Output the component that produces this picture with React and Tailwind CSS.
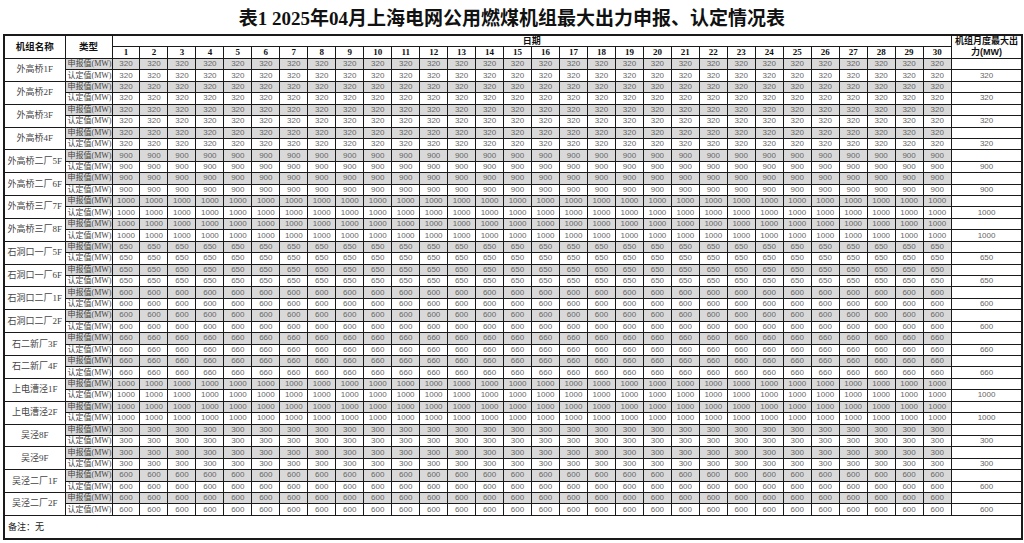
import React from 'react';

const units = [
  ['外高桥1F', 320],
  ['外高桥2F', 320],
  ['外高桥3F', 320],
  ['外高桥4F', 320],
  ['外高桥二厂5F', 900],
  ['外高桥二厂6F', 900],
  ['外高桥三厂7F', 1000],
  ['外高桥三厂8F', 1000],
  ['石洞口一厂5F', 650],
  ['石洞口一厂6F', 650],
  ['石洞口二厂1F', 600],
  ['石洞口二厂2F', 600],
  ['石二新厂3F', 660],
  ['石二新厂4F', 660],
  ['上电漕泾1F', 1000],
  ['上电漕泾2F', 1000],
  ['吴泾8F', 300],
  ['吴泾9F', 300],
  ['吴泾二厂1F', 600],
  ['吴泾二厂2F', 600],
];

const days = Array.from({ length: 30 }, (_, i) => i + 1);

const serif = "font-['Liberation_Serif','Noto_Sans_CJK_SC',serif]";
const sans = "font-['Liberation_Sans','Noto_Sans_CJK_SC',sans-serif]";
const cell = 'border border-[#1a1a1a] p-0';
const dayCell = 'border border-x-[1.5px] border-[#1a1a1a] p-0';

const UnitRows = ({ name, value }) => (
  <>
    <tr className="h-[11.43px]">
      <td rowSpan={2} className={`${cell} border-b-[1.5px] text-center text-[9px] text-[#444] ${serif}`}>
        {name}
      </td>
      <td className={`${cell} bg-[#d9d9d9] pl-[2px] text-[8px] text-[#444] whitespace-nowrap ${serif}`}>
        申报值(MW)
      </td>
      {days.map(d => (
        <td key={d} className={`${dayCell} bg-[#d9d9d9] text-center text-[8px] text-[#666] ${sans}`}>
          {value}
        </td>
      ))}
      <td className={cell}></td>
    </tr>
    <tr className="h-[11.43px]">
      <td className={`${cell} border-b-[1.5px] pl-[2px] text-[8px] text-[#444] whitespace-nowrap ${serif}`}>
        认定值(MW)
      </td>
      {days.map(d => (
        <td key={d} className={`${dayCell} border-b-[1.5px] text-center text-[8px] text-[#666] ${sans}`}>
          {value}
        </td>
      ))}
      <td className={`${cell} border-b-[1.5px] text-center text-[8px] text-[#666] ${sans}`}>{value}</td>
    </tr>
  </>
);

export default function App() {
  return (
    <div className="w-[1024px] h-[543px] bg-white overflow-hidden">
      <h1 className={`h-[34px] pt-[8px] text-center text-[19px] leading-[22px] font-bold text-[#111] ${serif}`}>
        表1 2025年04月上海电网公用燃煤机组最大出力申报、认定情况表
      </h1>
      <table className="ml-[3px] w-[1018px] table-fixed border-collapse border-2 border-[#1a1a1a] leading-none">
        <colgroup>
          <col className="w-[61px]" />
          <col className="w-[47px]" />
          {days.map(d => (
            <col key={d} className="w-[27.97px]" />
          ))}
          <col className="w-[71px]" />
        </colgroup>
        <thead>
          <tr className="h-[11.5px]">
            <th rowSpan={2} className={`${cell} text-[9.5px] font-bold text-[#111] ${sans}`}>机组名称</th>
            <th rowSpan={2} className={`${cell} text-[9.5px] font-bold text-[#111] ${sans}`}>类型</th>
            <th colSpan={30} className={`${cell} text-[9px] font-bold text-[#111] ${sans}`}>日期</th>
            <th rowSpan={2} className={`${cell} px-[2px] text-[9px] leading-[11px] font-bold text-[#111] ${sans}`}>
              机组月度最大出力(MW)
            </th>
          </tr>
          <tr className="h-[11.4px]">
            {days.map(d => (
              <th key={d} className={`${dayCell} text-[9px] font-bold text-[#111] ${serif}`}>{d}</th>
            ))}
          </tr>
        </thead>
        <tbody>
          {units.map(([name, value]) => (
            <UnitRows key={name} name={name} value={value} />
          ))}
          <tr className="h-[24px]">
            <td colSpan={33} className={`${cell} pl-[3px] text-[9px] text-[#222] ${serif}`}>
              备注：无
            </td>
          </tr>
        </tbody>
      </table>
    </div>
  );
}
